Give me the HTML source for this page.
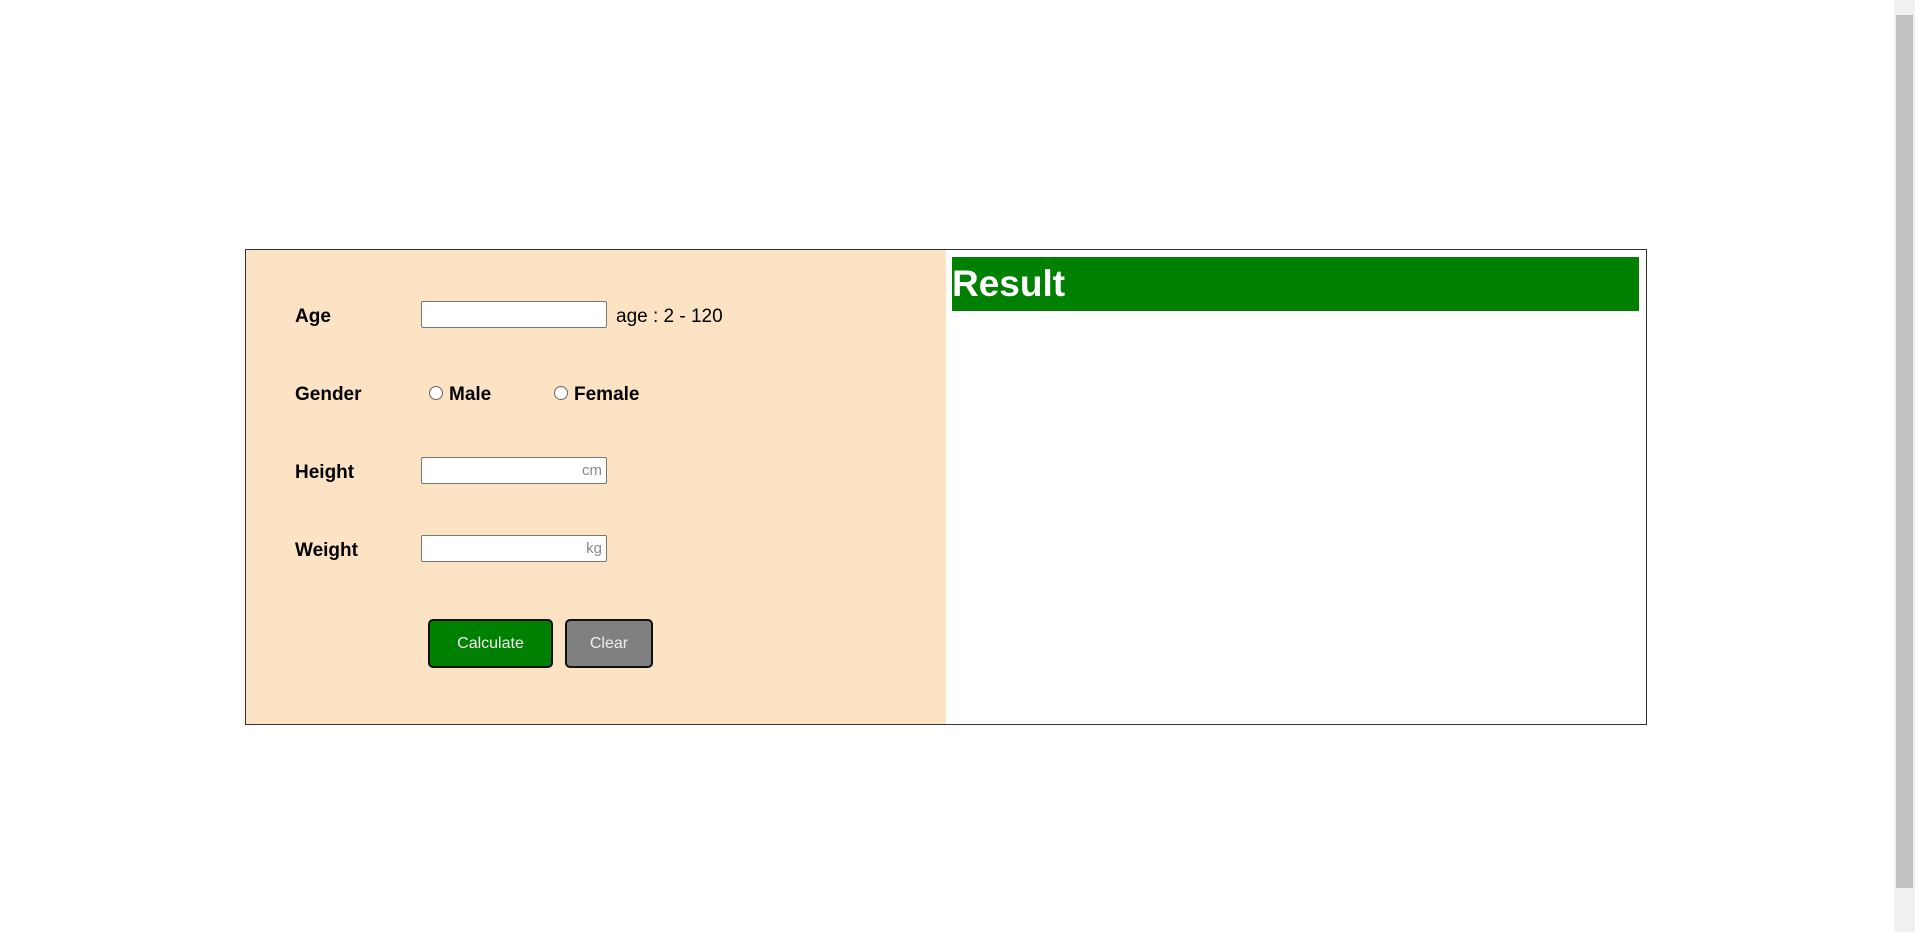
<!DOCTYPE html>
<html><head><style>
body{margin:0;width:1915px;height:932px;overflow:hidden;background:#fff;font-family:"Liberation Sans",sans-serif;position:relative}
.box{position:absolute;left:245px;top:249px;width:1400px;height:474px;border:1px solid #333}
.left{position:absolute;left:0;top:0;width:700px;height:474px;background:#fce3c4}
.lbl{position:absolute;left:49px;font-weight:bold;font-size:19px;color:#000}
.inp{position:absolute;left:175px;width:186px;height:27px;background:#fff;border:1px solid #777;border-radius:2px;box-sizing:border-box;font-size:15px;color:#888;text-align:right;padding-right:4px;line-height:25px}
.radio{position:absolute;width:14px;height:14px;border:1px solid #666;border-radius:50%;background:#fff;box-sizing:border-box}
.btn{position:absolute;top:369px;height:49px;border:2px solid #111;border-radius:5px;box-sizing:border-box;font-size:16px;text-align:center;line-height:45px}
.res{position:absolute;left:706px;top:7px;width:687px;height:54px;background:#008000;color:#fff;font-weight:bold;font-size:37px;line-height:54px}
.sb{position:absolute;left:1894px;top:0;width:21px;height:932px;background:#f0f0f0}
.th{position:absolute;left:2px;top:15px;width:17px;height:873px;background:#c1c1c1}
</style></head><body>
<div class="box">
<div class="left">
<div class="lbl" style="top:56px">Age</div>
<div class="inp" style="top:51px"></div>
<div style="position:absolute;left:370px;top:56px;font-size:19px">age : 2 - 120</div>
<div class="lbl" style="top:134px">Gender</div>
<div class="radio" style="left:183px;top:136px"></div>
<div class="lbl" style="left:203px;top:134px">Male</div>
<div class="radio" style="left:308px;top:136px"></div>
<div class="lbl" style="left:328px;top:134px">Female</div>
<div class="lbl" style="top:212px">Height</div>
<div class="inp" style="top:207px">cm</div>
<div class="lbl" style="top:290px">Weight</div>
<div class="inp" style="top:285px">kg</div>
<div class="btn" style="left:182px;width:125px;background:#008000;color:#eee">Calculate</div>
<div class="btn" style="left:319px;width:88px;background:#808080;color:#eee">Clear</div>
</div>
<div class="res">Result</div>
</div>
<div class="sb"><div class="th"></div></div>
</body></html>
